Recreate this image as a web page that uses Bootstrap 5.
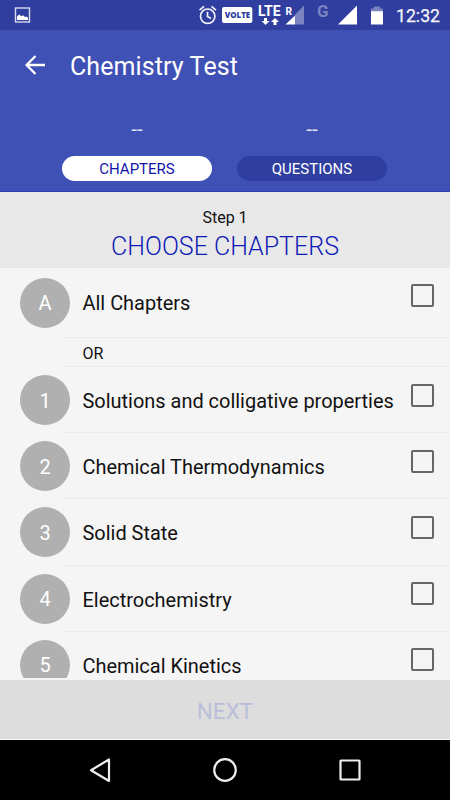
<!DOCTYPE html>
<html lang="en">
<head>
<meta charset="utf-8">
<meta name="viewport" content="width=device-width, initial-scale=1">
<title>Chemistry Test</title>
<link href="https://cdn.jsdelivr.net/npm/bootstrap@5.3.0/dist/css/bootstrap.min.css" rel="stylesheet">
<style>
body{font-family:Roboto,"Liberation Sans",sans-serif;color:#111;background:#f5f5f5}
.screen{width:450px;height:800px;background:#f5f5f5}
.statusbar{height:30px;background:#303f9f}
.statusbar svg{display:block}
.appbar{height:162px;background:#3f51b5;border-bottom:1px solid #2d41b0}
.toolbar-row{height:72px;padding-left:25px;gap:25px}
.app-title{font-size:25px;line-height:30px;letter-spacing:.1px;padding-top:2px}
.toolbar-row svg{margin-bottom:2px}
.counters{gap:25px;padding-top:12px;padding-right:1px}
.counter{width:150px}
.counter-value{height:42px;line-height:30px;font-size:21px;color:#dfe2f3}
.pill{height:25px;line-height:27px;font-size:15px;background:#303f9f}
.pill-on{background:#fff;color:#1414a8}
.step{height:75.5px;background:#e8e8e8;padding-top:13px}
.step-no{font-size:16px;line-height:25px}
.step-title{font-size:25px;line-height:33px;font-weight:300;color:#0f1bb5}
.chapter-list{height:410px}
.line{height:66.2px;padding:8px 16px 0 20px}
.line-all{height:70.5px;padding-top:10px}
.inset{position:relative}
.inset::after{content:"";position:absolute;left:63px;right:0;bottom:0;height:1px;background:#ececec}
.dot{width:50px;height:50px;background:#b0b0b0;font-size:20px;margin-right:12.5px;padding-top:1px}
.name{font-size:19.95px;line-height:50px;padding-top:1px}
.line-all .name{padding-top:0}
.tick{width:23px;height:23px;border:2px solid #666;border-radius:2px;margin-top:8.5px}
.line-all .tick{margin-top:6px}
.or{height:29px;padding-left:82.5px;font-size:16px;line-height:31px}
.next{height:59px;background:#ddd;color:#bbbedb;font-size:22.5px;padding-top:5px}
.sysbar{height:60px}
</style>
</head>
<body>
<div class="screen d-flex flex-column overflow-hidden">
  <div class="statusbar flex-shrink-0">
    <svg width="450" height="30" font-family="Roboto, sans-serif" fill="#fff">
      <rect x="15.5" y="8" width="14" height="14" fill="none" stroke="#d8dbef" stroke-width="1.4"/>
      <path d="M17 20v-3.500l2-2 2 1.500 2.500-.6 1.500 1.500 1.500-.5 1.500 1.500v2.100z"/>
      <g fill="none" stroke="#f1f2fa" stroke-width="1.700"><circle cx="207.700" cy="16.200" r="7.200"/><path d="M207.500 11.800v4.700l3.500 2M199.500 10.200l4.500-3.800M216 10.200l-4.500-3.800"/></g>
      <rect x="222" y="7" width="30.300" height="16" rx="2"/>
      <text x="224.700" y="18.200" font-family="Open Sans, sans-serif" font-size="9" font-weight="800" fill="#303f9f" textLength="25.500" lengthAdjust="spacingAndGlyphs">VOLTE</text>
      <text x="258" y="16" font-size="14" font-weight="700" textLength="22.500" lengthAdjust="spacingAndGlyphs">LTE</text>
      <path d="M264 18h3v3h2.500l-4 4-4-4h2.500zM273.500 25h3v-3h2.500l-4-4-4 4h2.500z"/>
      <text x="285.500" y="15" font-size="10" font-weight="700" textLength="6.500" lengthAdjust="spacingAndGlyphs">R</text>
      <path d="M304 5.500V24.500h-9V14.500z" fill="#7984c1"/><path d="M295 15.500v9h-9.500z"/>
      <text x="317" y="17" font-size="17" font-weight="700" fill="#7984c1" textLength="11.500" lengthAdjust="spacingAndGlyphs">G</text>
      <path d="M357 5.500v19h-19z"/>
      <path d="M371 11.500V8.500h2.800V6.500h6V8.500h3v3z" fill="#7984c1"/><path d="M371 11.200h12v13.300h-12z"/>
      <text x="396" y="22" font-size="18" font-weight="400" fill="#f4f5fb" stroke="#f4f5fb" stroke-width=".25" textLength="44" lengthAdjust="spacingAndGlyphs">12:32</text>
    </svg>
  </div>
  <header class="appbar flex-shrink-0 text-white">
    <div class="toolbar-row d-flex align-items-center">
      <svg width="20" height="20" viewBox="0 0 20 20" fill="none" stroke="#fff" stroke-width="2.300"><path d="M20 10H2M10.500 1 1.600 10l8.900 9"/></svg>
      <h1 class="app-title fw-normal m-0">Chemistry Test</h1>
    </div>
    <div class="counters d-flex justify-content-center text-center">
      <div class="counter"><div class="counter-value">--</div><div class="pill pill-on rounded-pill">CHAPTERS</div></div>
      <div class="counter"><div class="counter-value">--</div><div class="pill rounded-pill">QUESTIONS</div></div>
    </div>
  </header>
  <section class="step flex-shrink-0 text-center">
    <div class="step-no">Step 1</div>
    <h2 class="step-title m-0">CHOOSE CHAPTERS</h2>
  </section>
  <main class="chapter-list flex-shrink-0 overflow-hidden">
    <div class="line line-all inset d-flex"><span class="dot rounded-circle text-white d-flex align-items-center justify-content-center">A</span><span class="name text-nowrap">All Chapters</span><span class="tick ms-auto"></span></div>
    <div class="or inset">OR</div>
    <div class="line inset d-flex"><span class="dot rounded-circle text-white d-flex align-items-center justify-content-center">1</span><span class="name text-nowrap">Solutions and colligative properties</span><span class="tick ms-auto"></span></div>
    <div class="line inset d-flex"><span class="dot rounded-circle text-white d-flex align-items-center justify-content-center">2</span><span class="name text-nowrap">Chemical Thermodynamics</span><span class="tick ms-auto"></span></div>
    <div class="line inset d-flex"><span class="dot rounded-circle text-white d-flex align-items-center justify-content-center">3</span><span class="name text-nowrap">Solid State</span><span class="tick ms-auto"></span></div>
    <div class="line inset d-flex"><span class="dot rounded-circle text-white d-flex align-items-center justify-content-center">4</span><span class="name text-nowrap">Electrochemistry</span><span class="tick ms-auto"></span></div>
    <div class="line inset d-flex"><span class="dot rounded-circle text-white d-flex align-items-center justify-content-center">5</span><span class="name text-nowrap">Chemical Kinetics</span><span class="tick ms-auto"></span></div>
  </main>
  <footer class="mt-auto flex-shrink-0">
    <div class="next d-flex align-items-center justify-content-center mb-0">NEXT</div>
    <div class="pt-0 border-top border-light"></div>
    <div class="sysbar bg-black">
      <svg class="d-block" width="450" height="60" fill="none" stroke="#eee" stroke-width="2.200" stroke-linejoin="round"><path d="M109 19.500v21.500L91 30.200z"/><circle cx="225" cy="30" r="10.800"/><rect x="340.500" y="20.500" width="19" height="19" rx=".5"/></svg>
    </div>
  </footer>
</div>
<script src="https://cdn.jsdelivr.net/npm/bootstrap@5.3.0/dist/js/bootstrap.bundle.min.js"></script>
</body>
</html>
